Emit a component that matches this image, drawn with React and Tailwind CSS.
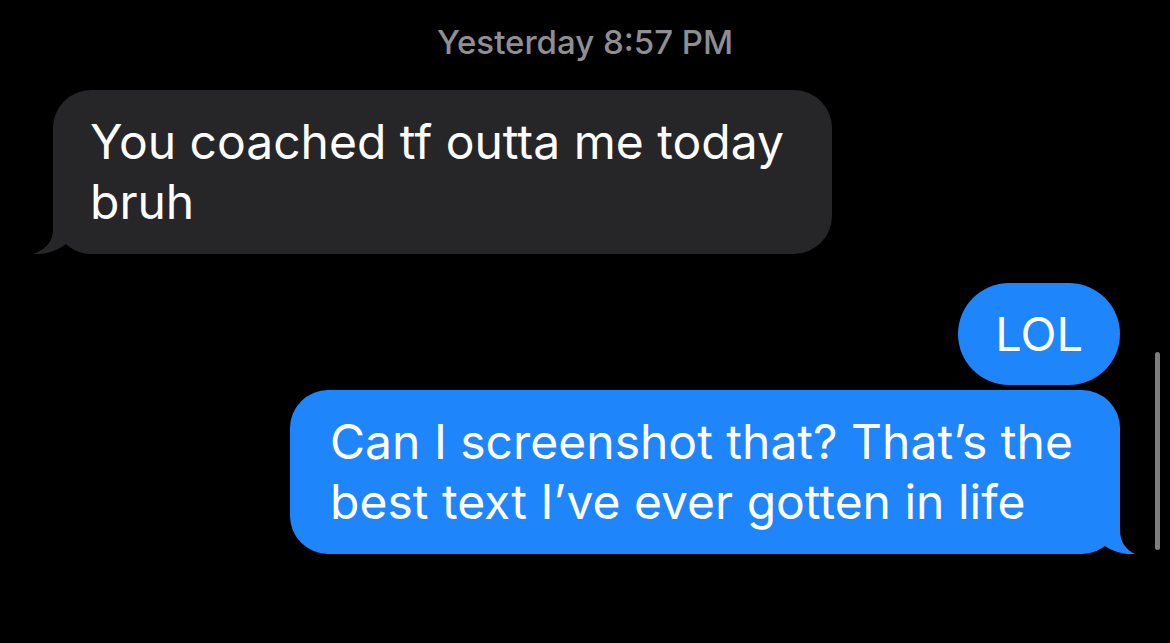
import React from "react";

const LeftTail = () => (
  <svg className="absolute left-[-20px] bottom-0" width="60" height="54" viewBox="0 0 60 54">
    <path d="M20 0 L20 30 C20 42 12 50 0 54 C12 55 25 51 34 43 C39 49 47 54 59 54 L59 0 Z" fill="#262628" />
  </svg>
);

const RightTail = () => (
  <svg className="absolute right-[-15px] bottom-0" width="60" height="54" viewBox="0 0 60 54">
    <path d="M45 0 L45 30 C45 42 51 50 60 54 C48 55 35 51 26 43 C21 49 13 54 1 54 L1 0 Z" fill="#1f85fb" />
  </svg>
);

const App = () => {
  return (
    <div
      className="relative min-h-[643px] w-full bg-black flex flex-col overflow-hidden"
      style={{ fontFamily: "Inter, 'Liberation Sans', sans-serif" }}
    >
      <div className="pt-[21px] text-center text-[33px] leading-[42px] font-medium text-[#8e8e93]">
        Yesterday 8:57 PM
      </div>

      <div className="relative mt-[27px] ml-[53px] w-[779px] rounded-[38px] bg-[#262628] px-[37px] py-[22px] text-[48px] leading-[60px] text-white">
        You coached tf outta me today bruh
        <LeftTail />
      </div>

      <div className="flex flex-col items-end pr-[50px] mt-[29px] gap-[5px]">
        <div className="rounded-full bg-[#1f85fb] px-[37px] py-[21px] text-[47px] leading-[60px] text-white">
          LOL
        </div>
        <div className="relative w-[830px] rounded-[38px] bg-[#1f85fb] pl-[40px] pr-[34px] py-[22px] text-[48px] leading-[60px] text-white">
          Can I screenshot that? That’s the best text I’ve ever gotten in life
          <RightTail />
        </div>
      </div>

      <div className="absolute right-[10px] top-[352px] h-[198px] w-[5px] rounded-full bg-[#7d7d7d]" />
    </div>
  );
};

export default App;
